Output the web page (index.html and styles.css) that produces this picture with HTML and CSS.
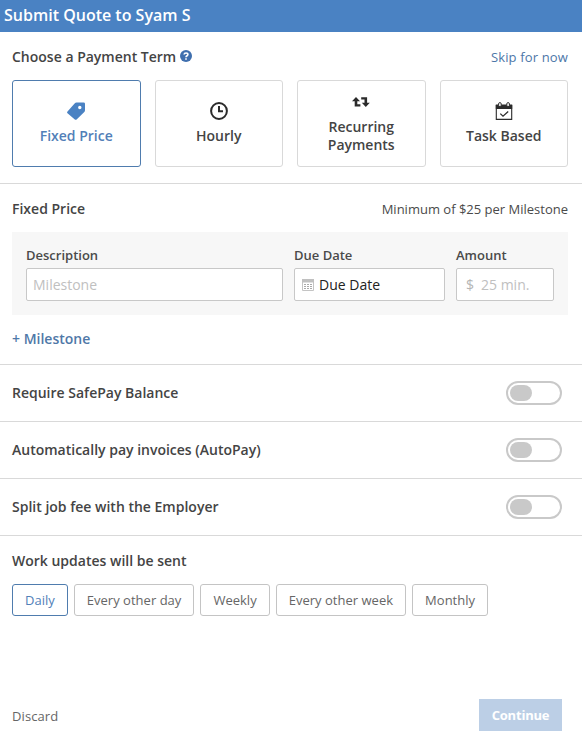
FILE: index.html
```html
<!DOCTYPE html>
<html lang="en">

<head>
    <meta charset="utf-8">
    <title>Submit Quote</title>
    <link rel="stylesheet" href="styles.css">
</head>

<body>
    <header class="header">Submit Quote to Syam S</header>

    <div class="section terms">
        <div class="heading">
            <h2>Choose a Payment Term
                <svg class="help" viewBox="0 0 12 12" width="12" height="12">
                    <circle cx="6" cy="6" r="6" fill="#3f6fae" />
                    <path d="M4.1 4.5C4.2 2.5 7.9 2.5 7.9 4.5C7.9 5.8 6 5.7 6 7.3M6 8.2V9.8" fill="none" stroke="#fff" stroke-width="1.6" />
                </svg>
            </h2>
            <a href="#" class="skip">Skip for now</a>
        </div>
        <div class="cards">
            <button class="card active">
                <svg viewBox="0 0 18 18" width="18" height="18">
                    <path d="M9.6 0.5H16.6Q18 0.5 18 1.8V8.3Q18 9.3 17.3 10L9.6 17.4Q8.7 18.2 7.8 17.4L0.5 11.3Q-0.3 10.4 0.5 9.4L7.6 1.4Q8.4 0.5 9.6 0.5ZM12.8 3.8A1.7 1.7 0 1 0 12.8 7.2A1.7 1.7 0 1 0 12.8 3.8Z" fill="#4a82c3" fill-rule="evenodd" />
                </svg>
                <span>Fixed Price</span>
            </button>
            <button class="card">
                <svg viewBox="0 0 18 18" width="18" height="18" fill="none" stroke="#2b2b2b">
                    <circle cx="9" cy="9" r="7.9" stroke-width="2" />
                    <path d="M9 4V9.2H13" stroke-width="2" />
                </svg>
                <span>Hourly</span>
            </button>
            <button class="card tall">
                <svg viewBox="0 0 18 12" width="18" height="12" fill="#2b2b2b">
                    <path d="M4 1L8 5.2H5.3V8.3H8.4V10.5H2.7V5.2H0Z" />
                    <path d="M13.8 11L17.8 6.8H15.1V1.2H9.2V3.4H12.5V6.8H9.8Z" />
                </svg>
                <span>Recurring<br>Payments</span>
            </button>
            <button class="card">
                <svg viewBox="0 0 18 18" width="18" height="18">
                    <path d="M1.3 3V17.4H16.7V3" fill="none" stroke="#2b2b2b" stroke-width="1.1" />
                    <path d="M0.8 2.5H17.2V7H0.8Z" fill="#2b2b2b" />
                    <rect x="3.6" y="0.6" width="2.6" height="4" rx="1.3" fill="#fff" stroke="#2b2b2b" />
                    <rect x="11.8" y="0.6" width="2.6" height="4" rx="1.3" fill="#fff" stroke="#2b2b2b" />
                    <path d="M5.3 11.6L8 14.2L13.2 9.4" fill="none" stroke="#2b2b2b" stroke-width="1.3" />
                </svg>
                <span>Task Based</span>
            </button>
        </div>
    </div>

    <div class="section fixed">
        <div class="heading">
            <h2>Fixed Price</h2>
            <span class="note">Minimum of $25 per Milestone</span>
        </div>
        <div class="milestone">
            <label class="field description">
                <span class="label">Description</span>
                <span class="box"><input type="text" placeholder="Milestone"></span>
            </label>
            <label class="field date">
                <span class="label">Due Date</span>
                <span class="box">
                    <svg viewBox="0 0 12 12" width="12" height="12">
                        <path d="M0.5 0.5H11.5V11.5H0.5Z" fill="#fff" stroke="#c4c4c4" />
                        <path d="M0 0H12V3.5H0Z" fill="#c0c0c0" />
                        <path d="M2 5.5H10M2 7.5H10M2 9.5H10" stroke="#aaa" stroke-dasharray="2 1" />
                    </svg>
                    <input type="text" value="Due Date">
                </span>
            </label>
            <label class="field amount">
                <span class="label">Amount</span>
                <span class="box"><span class="dollar">$</span><input type="text" placeholder="25 min."></span>
            </label>
        </div>
        <a href="#" class="add">+ Milestone</a>
    </div>

    <div class="section option">
        <h2>Require SafePay Balance</h2>
        <button class="toggle"></button>
    </div>
    <div class="section option">
        <h2>Automatically pay invoices (AutoPay)</h2>
        <button class="toggle"></button>
    </div>
    <div class="section option">
        <h2>Split job fee with the Employer</h2>
        <button class="toggle"></button>
    </div>

    <div class="updates">
        <h2>Work updates will be sent</h2>
        <div class="choices">
            <button class="choice active">Daily</button>
            <button class="choice">Every other day</button>
            <button class="choice">Weekly</button>
            <button class="choice">Every other week</button>
            <button class="choice">Monthly</button>
        </div>
    </div>

    <footer class="footer">
        <a href="#" class="discard">Discard</a>
        <button class="continue">Continue</button>
    </footer>
</body>

</html>
```
FILE: styles.css
```css
* {
    box-sizing: border-box;
}

body {
    display: flex;
    flex-direction: column;
    height: 744px;
    margin: 0;
    background-color: #fff;
    color: #4a4a4a;
    font-family: "Open Sans", sans-serif;
    font-size: 13px;
    line-height: 18px;
}

button,
input {
    padding: 0;
    border: none;
    background: none;
    color: inherit;
    font: inherit;
}

a {
    text-decoration: none;
}

svg {
    display: block;
    flex: none;
}

h2 {
    margin: 0;
    color: #444;
    font-size: 14px;
    font-weight: 600;
    line-height: 20px;
}

.header {
    height: 32px;
    padding-left: 4px;
    background-color: #4a82c3;
    color: #fff;
    font-size: 16px;
    font-weight: 600;
    line-height: 31px;
}

.section {
    padding: 0 14px 0 12px;
    border-bottom: 1px solid #d9d9d9;
}

.heading {
    display: flex;
    justify-content: space-between;
    align-items: center;
}

.terms {
    height: 152px;
    padding-top: 15px;
}

.help {
    display: inline-block;
    vertical-align: 0;
}

.skip {
    color: #4d76a8;
    letter-spacing: 0.15px;
}

.cards {
    display: grid;
    grid-template-columns: repeat(4, 1fr);
    gap: 14px;
    margin-top: 13px;
}

.card {
    display: flex;
    flex-direction: column;
    align-items: center;
    justify-content: center;
    gap: 7px;
    height: 87px;
    border: 1px solid #d9d9d9;
    border-radius: 3px;
    color: #444;
    font-size: 14px;
    font-weight: 600;
    line-height: 18px;
}

.card.tall {
    gap: 10px;
    padding-top: 3px;
}

.card.active {
    border-color: #4f7cae;
    color: #5280b8;
}

.fixed {
    height: 181px;
    padding-top: 15px;
}

.milestone {
    display: flex;
    gap: 11px;
    height: 83px;
    margin-top: 13px;
    padding: 14px 14px 0;
    background-color: #f7f7f7;
}

.description {
    width: 257px;
}

.date {
    width: 151px;
}

.amount {
    width: 98px;
}

.label {
    display: block;
    height: 22px;
    font-weight: 600;
}

.box {
    display: flex;
    align-items: center;
    height: 33px;
    padding-left: 6px;
    border: 1px solid #c8c8c8;
    border-radius: 2px;
    background-color: #fff;
    font-size: 14px;
}

.box input {
    flex: 1;
    min-width: 0;
}

.box input::placeholder {
    color: #c0c0c0;
}

.date .box {
    gap: 5px;
    padding-left: 7px;
    color: #222;
}

.amount .box {
    gap: 7px;
    padding-left: 9px;
}

.dollar {
    color: #b5b5b5;
}

.add {
    display: block;
    margin-top: 14px;
    color: #4f78a8;
    font-size: 14px;
    font-weight: 600;
    line-height: 20px;
}

.option {
    display: flex;
    align-items: center;
    justify-content: space-between;
    height: 57px;
    padding-right: 20px;
}

.toggle {
    width: 56px;
    height: 24px;
    padding: 2px;
    border: 2px solid #c9c9c9;
    border-radius: 12px;
}

.toggle::before {
    content: "";
    display: block;
    width: 22px;
    height: 16px;
    border-radius: 8px;
    background-color: #c9c9c9;
}

.updates {
    padding: 15px 12px 0;
}

.choices {
    display: flex;
    gap: 6px;
    margin-top: 13px;
}

.choice {
    height: 32px;
    padding: 0 12px;
    border: 1px solid #c4c4c4;
    border-radius: 3px;
    color: #666;
    letter-spacing: 0.015px;
}

.choice.active {
    border-color: #4f7cae;
    color: #5280b8;
}

.footer {
    display: flex;
    align-items: center;
    justify-content: space-between;
    margin-top: auto;
    padding: 0 20px 13px 12px;
}

.discard {
    padding-top: 2px;
    color: #666;
    letter-spacing: 0.1px;
}

.continue {
    width: 83px;
    height: 32px;
    background-color: #bccfe6;
    color: #fff;
    font-weight: 700;
    letter-spacing: -0.2px;
}
```
